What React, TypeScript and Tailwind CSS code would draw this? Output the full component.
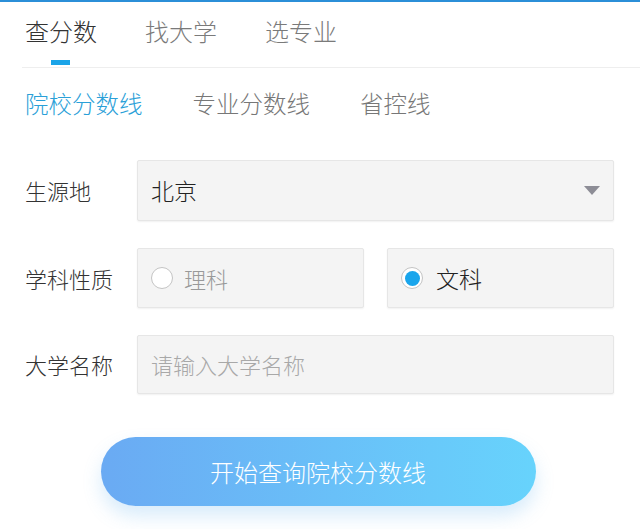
import { FC } from 'react';

const font = { fontFamily: '"Noto Sans CJK SC", "Noto Sans", sans-serif' };

const Box: FC<{ className?: string; children?: React.ReactNode }> = ({ className = '', children }) => (
  <div
    className={`flex items-center bg-[#f4f4f4] border border-[#e6e6e6] rounded-[2px] shadow-[0_1px_2px_rgba(0,0,0,0.06)] ${className}`}
  >
    {children}
  </div>
);

export default function App() {
  return (
    <div className="w-[640px] h-[529px] bg-white border-t-2 border-[#2b8fd8] overflow-hidden font-light" style={font}>
      {/* top tabs */}
      <div className="flex gap-[48px] pl-[25px] h-[65px] pt-[14px] text-[24px] leading-[30px]">
        <div className="relative w-[72px] text-[#333]">
          查分数
          <div className="absolute left-[26px] top-[44px] w-[19px] h-[5px] bg-[#1ba4e8]" />
        </div>
        <div className="w-[72px] text-[#7a7a7a]">找大学</div>
        <div className="w-[72px] text-[#7a7a7a]">选专业</div>
      </div>
      <div className="ml-[22px] h-px bg-[#eeeeee]" />

      {/* sub tabs */}
      <div className="flex gap-[50px] pl-[25px] pt-[20px] h-[92px] text-[23.5px] leading-[30px] text-[#777]">
        <div className="text-[#2aa0d8]">院校分数线</div>
        <div>专业分数线</div>
        <div>省控线</div>
      </div>

      {/* form */}
      <div className="flex flex-col gap-[27px] pl-[25px] pr-[26px]">
        <div className="flex items-center">
          <div className="w-[112px] text-[22px] text-[#333]">生源地</div>
          <Box className="h-[61px] flex-1 pl-[13px] pr-[13px] justify-between">
            <span className="text-[23px] text-[#222]">北京</span>
            <svg width="16" height="10" viewBox="0 0 16 10">
              <path d="M0 0 H16 L8 9 Z" fill="#8d8d96" />
            </svg>
          </Box>
        </div>

        <div className="flex items-center">
          <div className="w-[112px] text-[22px] text-[#333]">学科性质</div>
          <div className="flex-1 flex gap-[23px]">
            <Box className="h-[60px] flex-1 pl-[13px] gap-[11px]">
              <span className="w-[22px] h-[22px] rounded-full border border-[#c4c4c4] bg-white" />
              <span className="text-[22px] text-[#999]">理科</span>
            </Box>
            <Box className="h-[60px] flex-1 pl-[13px] gap-[13px]">
              <span className="w-[22px] h-[22px] rounded-full border border-[#c4c4c4] bg-white flex items-center justify-center">
                <span className="w-[15px] h-[15px] rounded-full bg-[#19a5ec]" />
              </span>
              <span className="text-[23px] text-[#222]">文科</span>
            </Box>
          </div>
        </div>

        <div className="flex items-center">
          <div className="w-[112px] text-[22px] text-[#333]">大学名称</div>
          <Box className="h-[59px] flex-1 pl-[13px]">
            <span className="text-[22px] text-[#a8a8a8]">请输入大学名称</span>
          </Box>
        </div>
      </div>

      <div className="flex justify-center pt-[43px] pr-[4px]">
        <button className="w-[435px] h-[69px] rounded-full bg-gradient-to-r from-[#6aaaf3] to-[#67d3fc] text-white text-[24px] font-light shadow-[0_10px_18px_rgba(100,180,240,0.25)]">
          开始查询院校分数线
        </button>
      </div>
    </div>
  );
}
